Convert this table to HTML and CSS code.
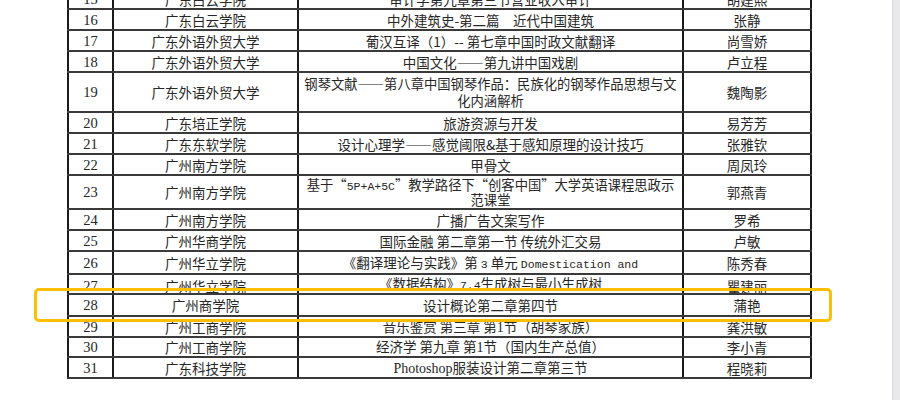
FILE: index.html
```html
<!DOCTYPE html>
<html lang="zh-CN">
<head>
<meta charset="utf-8">
<title>名单</title>
<link rel="stylesheet" href="styles.css">
</head>
<body>
<div class="page">
  <div class="sheet">
    <table class="list">
      <colgroup>
        <col class="c-no"><col class="c-school"><col class="c-course"><col class="c-name">
      </colgroup>
      <tbody>
        <tr class="h21"><td class="no">15</td><td>广东白云学院</td><td>审计学第九章第三节营业收入审计</td><td>胡建熙</td></tr>
        <tr class="h21"><td class="no">16</td><td>广东白云学院</td><td>中外建筑史-第二篇&emsp;近代中国建筑</td><td>张静</td></tr>
        <tr class="h21"><td class="no">17</td><td>广东外语外贸大学</td><td>葡汉互译（1）-- 第七章中国时政文献翻译</td><td>尚雪娇</td></tr>
        <tr class="h21"><td class="no">18</td><td>广东外语外贸大学</td><td>中国文化——第九讲中国戏剧</td><td>卢立程</td></tr>
        <tr class="h40"><td class="no">19</td><td>广东外语外贸大学</td><td class="wrap wide">钢琴文献——第八章中国钢琴作品：民族化的钢琴作品思想与文化内涵解析</td><td>魏陶影</td></tr>
        <tr class="h21"><td class="no">20</td><td>广东培正学院</td><td>旅游资源与开发</td><td>易芳芳</td></tr>
        <tr class="h21"><td class="no">21</td><td>广东东软学院</td><td>设计心理学——感觉阈限&amp;基于感知原理的设计技巧</td><td>张雅钦</td></tr>
        <tr class="h21"><td class="no">22</td><td>广州南方学院</td><td>甲骨文</td><td>周凤玲</td></tr>
        <tr class="h34"><td class="no">23</td><td>广州南方学院</td><td class="wrap tight">基于“<span class="mono">5P+A+5C</span>”教学路径下“创客中国”大学英语课程思政示范课堂</td><td>郭燕青</td></tr>
        <tr class="h21"><td class="no">24</td><td>广州南方学院</td><td>广播广告文案写作</td><td>罗希</td></tr>
        <tr class="h21"><td class="no">25</td><td>广州华商学院</td><td>国际金融 第二章第一节 传统外汇交易</td><td>卢敏</td></tr>
        <tr class="h22"><td class="no">26</td><td>广州华立学院</td><td class="clip"><div class="clip-box">《翻译理论与实践》第 <span class="mono">3</span> 单元 <span class="mono">Domestication and Foreignization</span></div></td><td>陈秀春</td></tr>
        <tr class="h20"><td class="no low">27</td><td class="low">广州华立学院</td><td class="low">《数据结构》<span class="mono">7.4</span>生成树与最小生成树</td><td class="low">瞿建丽</td></tr>
        <tr class="h22"><td class="no">28</td><td>广州商学院</td><td>设计概论第二章第四节</td><td>蒲艳</td></tr>
        <tr class="h21"><td class="no">29</td><td>广州工商学院</td><td>音乐鉴赏 第三章 第<span class="num">1</span>节（胡琴家族）</td><td>龚洪敏</td></tr>
        <tr class="h20"><td class="no">30</td><td>广州工商学院</td><td>经济学 第九章 第<span class="num">1</span>节（国内生产总值）</td><td>李小青</td></tr>
        <tr class="h21"><td class="no">31</td><td>广东科技学院</td><td><span class="num">Photoshop</span>服装设计第二章第三节</td><td>程晓莉</td></tr>
      </tbody>
    </table>
    <div class="mark"></div>
  </div>
</div>
<div class="scrollbar"></div>
</body>
</html>
```

FILE: styles.css
```css
html, body {
  margin: 0;
  padding: 0;
  background: #ffffff;
}

body {
  display: flex;
  width: 900px;
  height: 400px;
  overflow: hidden;
  font-family: "Noto Sans CJK SC", "Liberation Serif", sans-serif;
  color: #262626;
}

.page {
  flex: 1;
  overflow: hidden;
}

.sheet {
  position: relative;
  margin-top: -13px;
  padding-left: 67px;
}

.list {
  border-collapse: collapse;
  table-layout: fixed;
  width: 745px;
  border: 2px solid #151515;
}

.c-no { width: 45px; }
.c-school { width: 185px; }
.c-course { width: 385px; }
.c-name { width: 128px; }

.list td {
  border-left: 2px solid #1a1a1a;
  border-right: 2px solid #1a1a1a;
  border-top: 2px solid #3a3a3a;
  border-bottom: 2px solid #3a3a3a;
  padding: 0 4px;
  text-align: center;
  vertical-align: middle;
  font-size: 13.5px;
  line-height: 16px;
  white-space: nowrap;
  overflow: hidden;
}

.list td.no {
  font-family: "Liberation Serif", serif;
  font-size: 14.5px;
}

.h20 { height: 20px; }
.h21 { height: 21px; }
.h22 { height: 22px; }
.h34 { height: 34px; }
.h40 { height: 40px; }

.list td.wrap {
  white-space: normal;
  padding: 0 2px;
  font-size: 13.3px;
}

.list td.wide { line-height: 17px; }
.list td.tight { line-height: 13px; }

.mono {
  font-family: "Liberation Mono", monospace;
  font-size: 11.5px;
}

.num {
  font-family: "Liberation Serif", serif;
  font-size: 14px;
}

.list td.clip {
  padding: 0;
  vertical-align: top;
}

.clip-box {
  height: 21px;
  overflow: hidden;
  white-space: normal;
  padding: 3px 40px 0;
  line-height: 15px;
  box-sizing: border-box;
}

.list td.low {
  vertical-align: bottom;
  line-height: 14px;
  padding-bottom: 0;
}

.mark {
  position: absolute;
  left: 34px;
  top: 301px;
  width: 798px;
  height: 34px;
  border: 3px solid #ffbf00;
  border-radius: 5px;
  box-sizing: border-box;
}

.scrollbar {
  width: 7px;
  flex: 0 0 7px;
  background: #e9e9eb;
  border-left: 1px solid #dcdcde;
}
```
